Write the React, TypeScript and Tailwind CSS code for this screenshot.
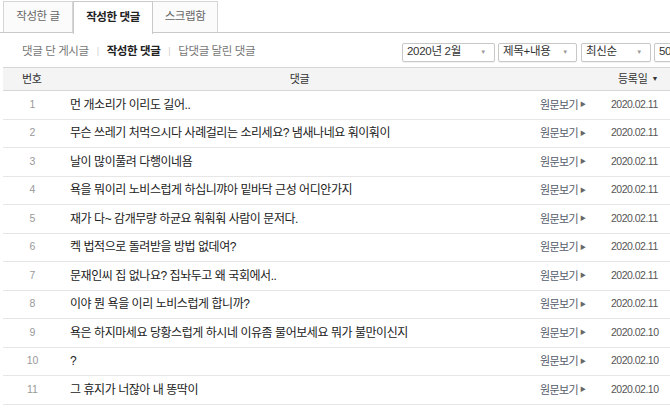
import React from 'react'

const FONT = { fontFamily: '"Liberation Sans", "Noto Sans CJK KR", sans-serif' }

const ROWS: [number, string, string][] = [
  [1, '먼 개소리가 이리도 길어..', '2020.02.11'],
  [2, '무슨 쓰레기 처먹으시다 사례걸리는 소리세요? 냄새나네요 훠이훠이', '2020.02.11'],
  [3, '날이 많이풀려 다행이네욤', '2020.02.11'],
  [4, '욕을 뭐이리 노비스럽게 하십니꺄아 밑바닥 근성 어디안가지', '2020.02.11'],
  [5, '재가 다~ 감개무량 하균요 훠훠훠 사람이 문저다.', '2020.02.11'],
  [6, '켁 법적으로 돌려받을 방법 없데여?', '2020.02.11'],
  [7, '문재인씨 집 없나요? 집놔두고 왜 국회에서..', '2020.02.11'],
  [8, '이야 뭔 욕을 이리 노비스럽게 합니까?', '2020.02.11'],
  [9, '욕은 하지마세요 당황스럽게 하시네 이유좀 물어보세요 뭐가 불만이신지', '2020.02.10'],
  [10, '?', '2020.02.10'],
  [11, '그 휴지가 너잖아 내 똥딱이', '2020.02.10'],
]

function Select({ label, width }: { label: string; width: string }) {
  return (
    <div
      className={`${width} h-[19px] flex items-center justify-between pl-[4px] pr-[8px] border border-[#c8c8c8] rounded-[2px] bg-white shadow-[0_1px_1px_rgba(0,0,0,0.06)] text-[11.5px] tracking-[-0.3px] text-[#333] shrink-0 whitespace-nowrap`}
    >
      <span>{label}</span>
      <span className="text-[6px] text-[#999]">▼</span>
    </div>
  )
}

export default function App() {
  return (
    <div className="w-[670px] h-[413px] overflow-hidden bg-white" style={FONT}>
      <div className="w-[690px] pl-[3px]">
        {/* tabs */}
        <div className="flex h-[33px] pt-[1px] border-b border-[#c9c9c9] -ml-[3px] pl-[3px]">
          <div className="w-[70px] flex items-center justify-center border border-[#d5d5d5] border-b-0 bg-[#fbfbfb] text-[11.5px] tracking-[-0.4px] text-[#666]">
            작성한 글
          </div>
          <div className="w-[80px] h-[33px] flex items-center justify-center border border-[#c9c9c9] border-b-0 bg-white text-[11.5px] tracking-[-0.4px] font-semibold text-[#222] relative z-10">
            작성한 댓글
          </div>
          <div className="w-[65px] flex items-center justify-center border border-l-0 border-[#d5d5d5] border-b-0 bg-[#fbfbfb] text-[11.5px] tracking-[-0.4px] text-[#666]">
            스크랩함
          </div>
        </div>

        {/* filter row */}
        <div className="flex items-center h-[34px] pt-[4px]">
          <div className="w-[399px] shrink-0 flex items-center pl-[19px] text-[11.5px] tracking-[-0.4px] text-[#777] whitespace-nowrap">
            <span>댓글 단 게시글</span>
            <span className="mx-[8px] text-[9px] text-[#d0d0d0]">|</span>
            <span className="font-bold text-[#222]">작성한 댓글</span>
            <span className="mx-[8px] text-[9px] text-[#d0d0d0]">|</span>
            <span>답댓글 달린 댓글</span>
          </div>
          <div className="flex items-center">
            <Select label="2020년 2월" width="w-[93px]" />
            <div className="w-[3px]" />
            <Select label="제목+내용" width="w-[79px]" />
            <div className="w-[4px]" />
            <Select label="최신순" width="w-[70px]" />
            <div className="w-[3px]" />
            <Select label="50" width="w-[40px]" />
          </div>
        </div>

        {/* header */}
        <div className="flex items-center h-[24px] bg-[#f4f4f4] border-t border-b border-[#d6d6d6] text-[11px] tracking-[-0.3px] text-[#333]">
          <div className="w-[67px] pl-[19px]">번호</div>
          <div className="w-[459px] text-center">댓글</div>
          <div className="flex-1 pl-[89px] flex items-center gap-[4px]">
            등록일 <span className="text-[7px]">▼</span>
          </div>
        </div>

        {/* rows */}
        {ROWS.map(([n, text, date]) => (
          <div key={n} className="flex items-center h-[28.5px] border-b border-[#e6e6e6]">
            <div className="w-[67px] pl-[19px] text-[10.5px] text-[#999]">
              <span className="inline-block w-[21px] text-center">{n}</span>
            </div>
            <div className="w-[470px] text-[12px] tracking-[-0.45px] text-[#222] truncate">{text}</div>
            <div className="w-[71px] flex items-center text-[11px] tracking-[-0.6px] text-[#555c6b]">
              원문보기<span className="text-[6px] ml-[2px] text-[#666]">▶</span>
            </div>
            <div className="text-[10.5px] tracking-[-0.5px] text-[#555]">{date}</div>
          </div>
        ))}
      </div>
    </div>
  )
}
